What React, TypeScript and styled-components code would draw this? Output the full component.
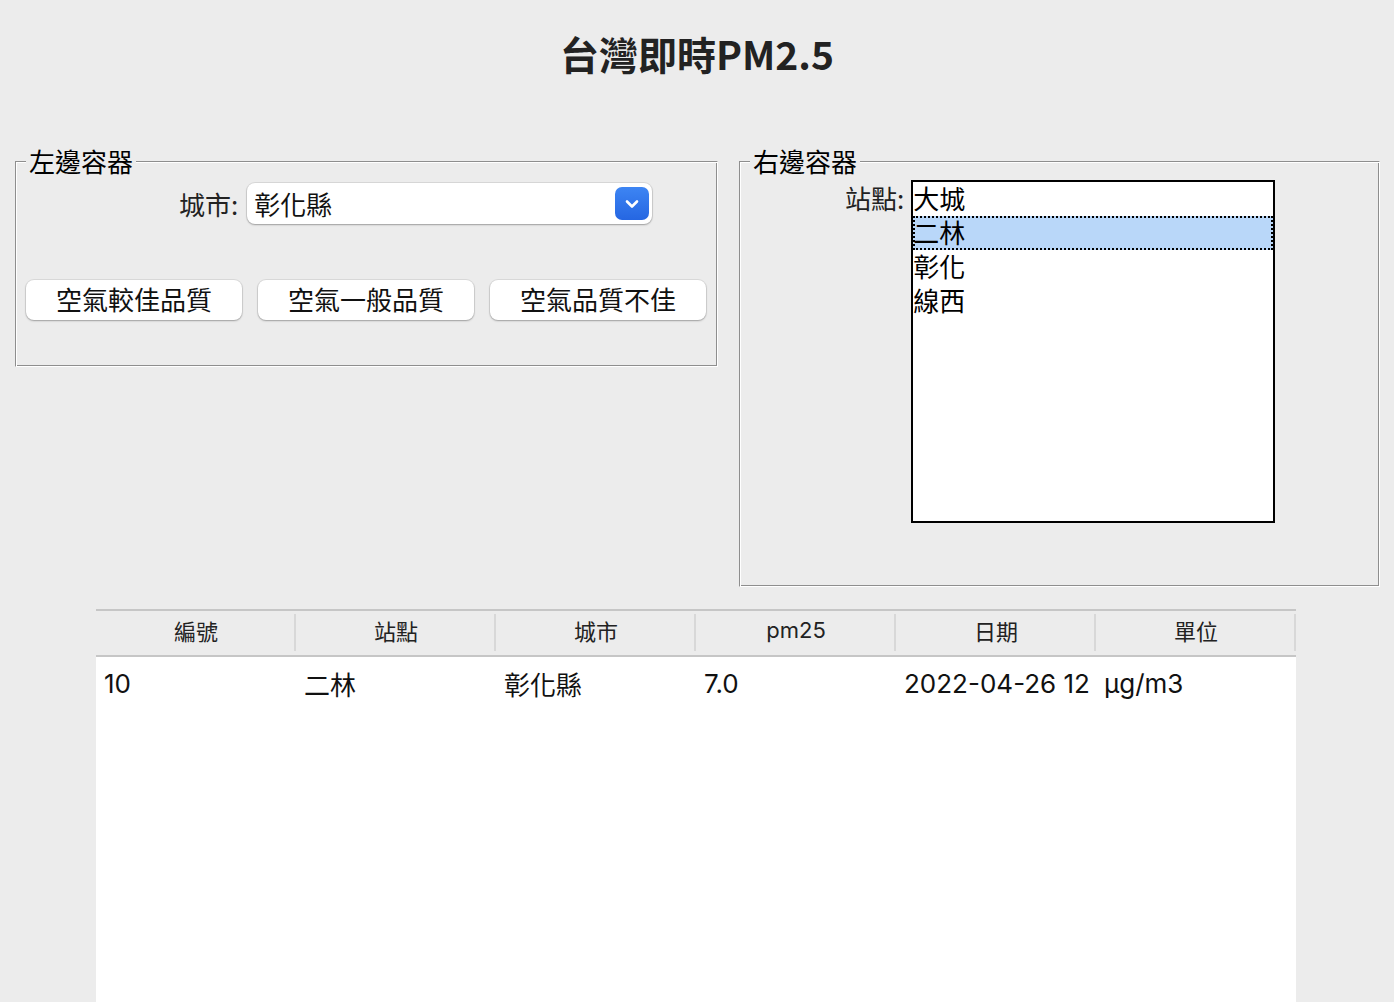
import React from "react";
import styled, { createGlobalStyle } from "styled-components";

const Global = createGlobalStyle`
  html, body { margin: 0; padding: 0; background: #ececec; }
  body { font-family: "Noto Sans CJK TC", "Noto Sans", sans-serif; color: #000; }
  * { box-sizing: border-box; }
`;

const Page = styled.div`
  width: 1394px;
  height: 1002px;
  overflow: hidden;
  background: #ececec;
  display: flex;
  flex-direction: column;
`;

const Title = styled.h1`
  margin: 25px 0 0;
  height: 56px;
  line-height: 56px;
  text-align: center;
  font-size: 39px;
  font-weight: 700;
  color: #222;
  font-family: "Noto Sans CJK TC", "Liberation Sans", sans-serif;
`;

const FramesRow = styled.div`
  display: flex;
  align-items: flex-start;
  gap: 21px;
  margin-top: 80px;
  padding-left: 15px;
`;

const Frame = styled.div<{ $w: number; $h: number }>`
  position: relative;
  width: ${(p) => p.$w}px;
  height: ${(p) => p.$h}px;
  border: 1px solid;
  border-color: #8e8e8e #fff #fff #8e8e8e;
  box-shadow: inset 1px 1px 0 #fff, inset -1px -1px 0 #8e8e8e;
  padding: 1px;
  display: flex;
  flex-direction: column;
`;

const Legend = styled.span`
  position: absolute;
  top: -16px;
  left: 10px;
  padding: 0 3px;
  background: #ececec;
  font-size: 26px;
  line-height: 30px;
  color: #000;
`;

const CityRow = styled.div`
  display: flex;
  align-items: center;
  margin-top: 20px;
  padding-left: 162px;
  gap: 9px;
`;

const FieldLabel = styled.span`
  font-size: 26px;
  line-height: 34px;
  color: #222;
`;

const Combo = styled.div`
  width: 405px;
  height: 41px;
  background: #fff;
  border-radius: 8px;
  box-shadow: 0 0 0 1px rgba(0, 0, 0, 0.08), 0 1px 2px rgba(0, 0, 0, 0.28);
  display: flex;
  align-items: center;
  justify-content: space-between;
  padding: 0 3px 0 7px;
`;

const ComboText = styled.span`
  font-size: 26px;
  line-height: 34px;
  color: #111;
`;

const ComboArrow = styled.div`
  width: 34px;
  height: 33px;
  border-radius: 7px;
  background: linear-gradient(#3d85f3, #2566e2);
  display: flex;
  align-items: center;
  justify-content: center;
`;

const ButtonRow = styled.div`
  display: flex;
  gap: 16px;
  margin-top: 56px;
  padding-left: 9px;
`;

const Button = styled.button`
  width: 216px;
  height: 40px;
  border: none;
  border-radius: 8px;
  background: #fff;
  box-shadow: 0 0 0 1px rgba(0, 0, 0, 0.07), 0 1px 2px rgba(0, 0, 0, 0.28);
  font-family: "Noto Sans CJK TC", sans-serif;
  font-size: 26px;
  line-height: 34px;
  color: #111;
  padding: 0 0 2px;
  cursor: pointer;
`;

const StationRow = styled.div`
  display: flex;
  align-items: flex-start;
  margin-top: 17px;
  padding-left: 104px;
  gap: 7px;
`;

const StationLabel = styled(FieldLabel)`
  margin-top: 1px;
`;

const ListBox = styled.ul`
  list-style: none;
  margin: 0;
  padding: 0;
  width: 364px;
  height: 343px;
  border: 2px solid #000;
  background: #fff;
`;

const ListItem = styled.li<{ $selected?: boolean }>`
  height: 34px;
  font-size: 26px;
  line-height: 31px;
  color: #000;
  padding-left: 0;
  background: ${(p) => (p.$selected ? "#b9d7f9" : "transparent")};
  outline: ${(p) => (p.$selected ? "2px dotted #000" : "none")};
  outline-offset: -2px;
`;

const Table = styled.div`
  margin: 22px 0 0 96px;
  width: 1200px;
  display: flex;
  flex-direction: column;
  flex: 1;
`;

const HeaderRow = styled.div`
  display: grid;
  grid-template-columns: repeat(6, 200px);
  height: 48px;
  border-top: 2px solid #c6c6c6;
  border-bottom: 2px solid #c6c6c6;
  background: #ececec;
`;

const HeaderCell = styled.div`
  display: flex;
  align-items: center;
  justify-content: center;
  font-size: 22px;
  font-family: "Inter", "Noto Sans CJK TC", sans-serif;
  color: #222;
  position: relative;
  padding-bottom: 7px;
  &::after {
    content: "";
    position: absolute;
    right: 0;
    top: 3px;
    bottom: 4px;
    width: 2px;
    background: #d8d8d8;
  }
`;

const Body = styled.div`
  flex: 1;
  background: #fff;
`;

const DataRow = styled.div`
  display: grid;
  grid-template-columns: repeat(6, 200px);
  height: 52px;
  align-items: center;
`;

const DataCell = styled.div`
  padding-left: 8px;
  font-size: 26px;
  color: #111;
  white-space: nowrap;
  font-family: "Inter", "Noto Sans CJK TC", sans-serif;
`;

const Chevron = () => (
  <svg width="16" height="12" viewBox="0 0 16 12">
    <path d="M3 3.5 L8 8.5 L13 3.5" fill="none" stroke="#fff" strokeWidth="2.6" strokeLinecap="round" strokeLinejoin="round" />
  </svg>
);

const headers = ["編號", "站點", "城市", "pm25", "日期", "單位"];
const row = ["10", "二林", "彰化縣", "7.0", "2022-04-26 12", "µg/m3"];
const stations = ["大城", "二林", "彰化", "線西"];

export default function App() {
  return (
    <Page>
      <Global />
      <Title>台灣即時PM2.5</Title>
      <FramesRow>
        <Frame $w={703} $h={206}>
          <Legend>左邊容器</Legend>
          <CityRow>
            <FieldLabel>城市:</FieldLabel>
            <Combo>
              <ComboText>彰化縣</ComboText>
              <ComboArrow>
                <Chevron />
              </ComboArrow>
            </Combo>
          </CityRow>
          <ButtonRow>
            <Button>空氣較佳品質</Button>
            <Button>空氣一般品質</Button>
            <Button>空氣品質不佳</Button>
          </ButtonRow>
        </Frame>
        <Frame $w={641} $h={426}>
          <Legend>右邊容器</Legend>
          <StationRow>
            <StationLabel>站點:</StationLabel>
            <ListBox>
              {stations.map((s, i) => (
                <ListItem key={s} $selected={i === 1}>
                  {s}
                </ListItem>
              ))}
            </ListBox>
          </StationRow>
        </Frame>
      </FramesRow>
      <Table>
        <HeaderRow>
          {headers.map((h) => (
            <HeaderCell key={h}>{h}</HeaderCell>
          ))}
        </HeaderRow>
        <Body>
          <DataRow>
            {row.map((c, i) => (
              <DataCell key={i}>{c}</DataCell>
            ))}
          </DataRow>
        </Body>
      </Table>
    </Page>
  );
}
